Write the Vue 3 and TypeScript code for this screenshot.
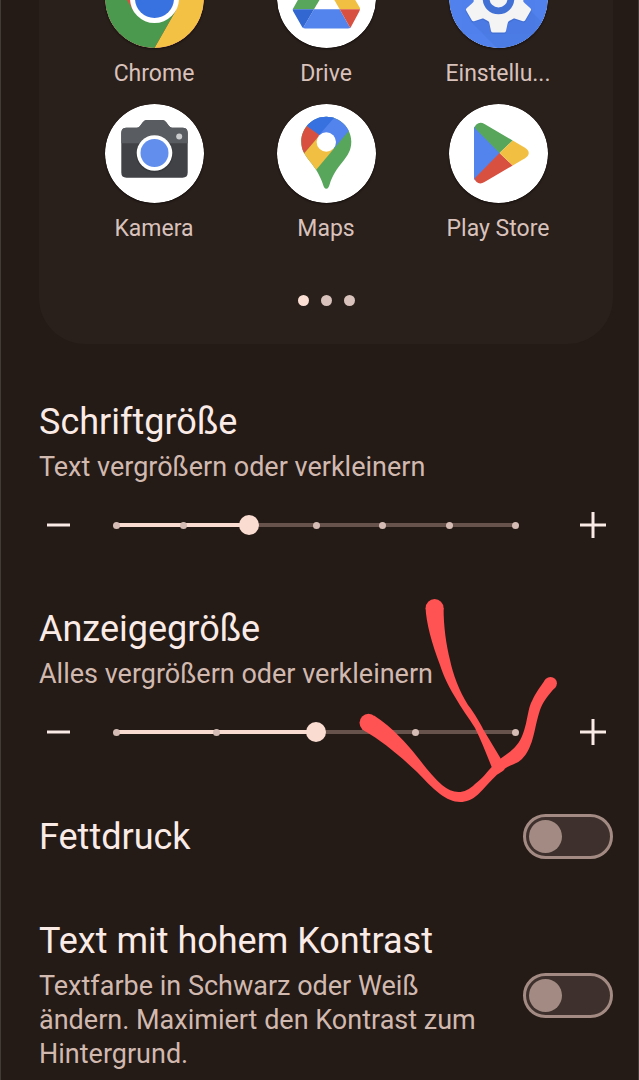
<script setup lang="ts">
import { reactive } from 'vue'

interface AppEntry {
  id: string
  label: string
}

interface SizeSetting {
  id: string
  title: string
  summary: string
  steps: number
  value: number
}

interface SwitchSetting {
  id: string
  title: string
  summary?: string
  on: boolean
}

const apps: AppEntry[] = [
  { id: 'chrome', label: 'Chrome' },
  { id: 'drive', label: 'Drive' },
  { id: 'settings', label: 'Einstellu...' },
  { id: 'camera', label: 'Kamera' },
  { id: 'maps', label: 'Maps' },
  { id: 'play', label: 'Play Store' },
]

const teeth = [0, 60, 120, 180, 240, 300]

const sizes = reactive<SizeSetting[]>([
  { id: 'font-size', title: 'Schriftgröße', summary: 'Text vergrößern oder verkleinern', steps: 7, value: 2 },
  { id: 'display-size', title: 'Anzeigegröße', summary: 'Alles vergrößern oder verkleinern', steps: 5, value: 2 },
])

const switches = reactive<SwitchSetting[]>([
  { id: 'bold', title: 'Fettdruck', on: false },
  {
    id: 'contrast',
    title: 'Text mit hohem Kontrast',
    summary: 'Textfarbe in Schwarz oder Weiß ändern. Maximiert den Kontrast zum Hintergrund.',
    on: false,
  },
])

function change(setting: SizeSetting, delta: number): void {
  setting.value = Math.min(setting.steps - 1, Math.max(0, setting.value + delta))
}
</script>

<template>
  <main class="page">
    <section class="preview">
      <ul class="apps">
        <li v-for="app in apps" :key="app.id" class="app">
          <svg class="app-icon" viewBox="0 0 99 99" aria-hidden="true">
            <circle cx="49.5" cy="49.5" r="49.5" fill="#fff" />
            <g v-if="app.id === 'chrome'">
              <circle cx="49.5" cy="49.5" r="49.5" fill="#d8513f" />
              <path d="M49.5 25H92.4A49.5 49.5 0 0 1 49.5 99L70.7 61.8Z" fill="#f3c244" />
              <path d="M70.7 61.8L49.5 99A49.5 49.5 0 0 1 6.6 24.8L28.3 61.8L49.5 74Z" fill="#4b994e" />
              <circle cx="49.5" cy="49.5" r="24.5" fill="#fff" />
              <circle cx="49.5" cy="49.5" r="19.5" fill="#3871e0" />
            </g>
            <g v-else-if="app.id === 'drive'">
              <path d="M15.7 60.3L37 22H38L50 38.4L37 60.3Z" fill="#58a55c" />
              <path d="M37 22Q49 19 61 22L50 38.4Z" fill="#3e8745" />
              <path d="M61 22L83 59V60.3H62.7L50 38.4Z" fill="#f1bf42" />
              <path d="M37 60.3H62.7L73.3 79L71 79.5H28L26 79Z" fill="#5383ec" />
              <path d="M15.7 60.3H37L26 79Q25 78 24 76L16 62Z" fill="#3266d0" />
              <path d="M62.7 60.3H83Q83 61 82 63L75 76Q74 78 73.3 79Z" fill="#d85140" />
            </g>
            <g v-else-if="app.id === 'settings'">
              <circle cx="49.5" cy="49.5" r="49.5" fill="#5081ec" />
              <path d="M22 73L43 94Q47 99 49.5 99A49.5 49.5 0 0 0 93 73L81 61Z" fill="#4878df" opacity=".6" />
              <g fill="#3d69ca" opacity=".6" transform="translate(0 1)">
                <circle cx="49.5" cy="49.5" r="25.5" />
                <path
                  v-for="angle in teeth"
                  :key="angle"
                  d="M37 71Q40 72 40.600 76L42 82.500Q42.500 84 44 84H55Q56.500 84 57 82.500L58.400 76Q59 72 62 71Z"
                  :transform="`rotate(${angle} 49.5 49.5)`"
                />
              </g>
              <g fill="#f4f4f5">
                <circle cx="49.5" cy="49.5" r="25" />
                <path
                  v-for="angle in teeth"
                  :key="angle"
                  d="M37 70Q40 71 40.500 75L42 82Q42.400 83.500 44 83.500H55Q56.600 83.500 57 82L58.500 75Q59 71 62 70Z"
                  :transform="`rotate(${angle} 49.5 49.5)`"
                />
              </g>
              <circle cx="49.5" cy="49.5" r="15.8" fill="#4271d6" />
              <circle cx="49.5" cy="49.5" r="9" fill="#f4f4f5" />
            </g>
            <g v-else-if="app.id === 'camera'">
              <path
                d="M21.500 23.700H32Q34 23.700 35 22L38 18Q39.500 16 42 16H57Q59.500 16 61 18L64 22Q65.500 23.700 67 23.700H77.500Q82.700 23.700 82.700 29V68.500Q82.700 73.700 77.500 73.700H21.500Q16.300 73.700 16.300 68.500V29Q16.300 23.700 21.500 23.700Z"
                fill="#404246"
              />
              <path
                d="M16.300 39.300V29Q16.300 23.700 21.500 23.700H32Q34 23.700 35 22L38 18Q39.500 16 42 16H57Q59.500 16 61 18L64 22Q65.500 23.700 67 23.700H77.500Q82.700 23.700 82.700 29V39.300Z"
                fill="#595c61"
              />
              <circle cx="49.5" cy="49.8" r="18.6" fill="#2d2f32" opacity=".5" />
              <circle cx="49.5" cy="49" r="17.8" fill="#fff" />
              <circle cx="49.5" cy="49" r="14" fill="#628fed" />
              <circle cx="74.2" cy="32.4" r="3" fill="#cbccce" />
            </g>
            <g v-else-if="app.id === 'maps'">
              <clipPath id="pin-shape">
                <path
                  d="M49.300 12.700C35.500 12.700 24.300 23.800 24.300 37.500C24.300 46 27.500 50.500 33 57.500C38.500 64.500 43 71 46 80.500C46.800 83.200 47.500 84.700 49.300 84.700C51.100 84.700 51.800 83.200 52.600 80.500C55.500 71 60 64.500 65.500 58C71 51 74.300 46 74.300 37.500C74.300 23.800 63 12.700 49.300 12.700Z"
                />
              </clipPath>
              <g clip-path="url(#pin-shape)">
                <path d="M20 10H80V90H20Z" fill="#58a65c" />
                <path d="M30.700 22.700L20 10H86L71.700 27L54 48L41.700 31.500Z" fill="#5383ec" />
                <path d="M30.700 22.700L22 12H60L56 15L41.700 31.500Z" fill="#3771e0" />
                <path d="M30.700 22.700L20 14V58L27.300 49.300L43 31.500Z" fill="#d85140" />
                <path d="M27.300 49.300L42 32L57 44.500L39 66L32 72Z" fill="#f1bf42" />
              </g>
              <circle cx="49.3" cy="38" r="9.7" fill="#fff" />
            </g>
            <g v-else>
              <path d="M25.500 22.500L51.500 49L25.500 76Q25 75.500 25 74V24.500Q25 23 25.500 22.500Z" fill="#5383ec" />
              <path d="M25.500 23.800C26.500 19.500 31 17 35.500 20L63.700 36.500L50.500 49Z" fill="#58a65c" />
              <path d="M25.500 74.500C26.500 78.800 31 81 35.500 78L63.700 61.500L50.500 49Z" fill="#d85140" />
              <path d="M63.700 36.500L76 43.700Q79.700 46 79.700 49Q79.700 52 76 54.300L63.700 61.500L50.500 49Z" fill="#f1bf42" />
            </g>
          </svg>
          <span class="app-label">{{ app.label }}</span>
        </li>
      </ul>
      <div class="dots">
        <span class="dot active"></span>
        <span class="dot"></span>
        <span class="dot"></span>
      </div>
    </section>

    <section v-for="item in sizes" :key="item.id" class="size">
      <label class="title" :for="item.id">{{ item.title }}</label>
      <p class="summary">{{ item.summary }}</p>
      <div class="slider-row">
        <button class="step" type="button" :aria-label="`${item.title} verkleinern`" @click="change(item, -1)">
          <svg viewBox="0 0 40 40" aria-hidden="true"><path d="M8 20H31" /></svg>
        </button>
        <div class="slider">
          <div class="track">
            <div class="fill" :style="{ width: `${(item.value / (item.steps - 1)) * 100}%` }"></div>
          </div>
          <div class="ticks">
            <span v-for="n in item.steps" :key="n" class="tick"></span>
          </div>
          <input :id="item.id" v-model.number="item.value" class="range" type="range" min="0" :max="item.steps - 1" step="1" />
        </div>
        <button class="step" type="button" :aria-label="`${item.title} vergrößern`" @click="change(item, 1)">
          <svg viewBox="0 0 40 40" aria-hidden="true"><path d="M7 20H33M20 7V33" /></svg>
        </button>
      </div>
    </section>

    <section class="switches">
      <label v-for="item in switches" :key="item.id" class="switch-row" :for="item.id">
        <span class="switch-text">
          <span class="title">{{ item.title }}</span>
          <span v-if="item.summary" class="summary">{{ item.summary }}</span>
        </span>
        <input :id="item.id" v-model="item.on" class="switch" type="checkbox" role="switch" />
      </label>
    </section>

    <svg class="scribble" viewBox="350 590 220 220" aria-hidden="true">
      <circle cx="434.6" cy="608" r="9" />
      <circle cx="368.5" cy="722.8" r="9" />
      <circle cx="550.5" cy="683.3" r="6.4" />
      <path
        d="M425.600 608H443.600C443.500 625 446 644 450 660C453 674 459 691 468 705C475 714 480 723 483 729L500.700 758.500L497 775L491.700 767C486 753 481 740 475 728C469 718 461 708 455 697C447 684 443 674 440 665C432 644 426 622 425.600 608Z"
      />
      <path
        d="M364 730.600L374 715.600C393 728 407 744 417 756.500C426 768 434 778 442 785C453 794 464 795 475 784C482 779 486 773 491.700 767L500.700 758.500C507 754 512 751 516.700 745C522 739 524 731 526 723.500C528 715 529 706 532 701C536 692 541 686 545.500 679.300L555.500 687.300C548 695 543 702 540 710C536 722 535 732 531.700 742C529 749 527 754 522 759C517 764 510 765 505 768.500C503 772 499 773 496.700 775C490 781 485 788 478 794.500C465 806 452 803 440 794C432 788 424 779 417 772C400 756 382 741 364 730.600Z"
      />
    </svg>
  </main>
</template>

<style>
body {
  margin: 0;
  background: #241a16;
}
</style>

<style scoped>
.page {
  position: relative;
  box-sizing: border-box;
  min-height: 100vh;
  overflow: hidden;
  padding: 0 25px 0 38px;
  border: solid #413a37;
  border-width: 0 1px;
  background: #241a16;
  color: #fbebe6;
  font-family: Roboto, "Noto Sans", sans-serif;
}

/* The upper app row is scrolled halfway past the top edge. */
.preview {
  margin-top: -51px;
  margin-bottom: 56px;
  padding: 0 29px 38px;
  border-radius: 0 0 46px 46px;
  background: #291f1b;
}

.apps {
  display: grid;
  grid-template-columns: repeat(3, 1fr);
  row-gap: 16px;
  margin: 0;
  padding: 0;
  list-style: none;
}

.app {
  display: flex;
  flex-direction: column;
  align-items: center;
  gap: 12px;
}

.app-icon {
  width: 99px;
  height: 99px;
  border-radius: 50%;
  box-shadow: 0 1px 2px rgba(0, 0, 0, 0.5);
}

.app-label {
  color: #d8c2bb;
  font-size: 23px;
  line-height: 28px;
}

.dots {
  display: flex;
  justify-content: center;
  gap: 12px;
  margin-top: 52px;
}

.dot {
  width: 11px;
  height: 11px;
  border-radius: 50%;
  background: #d8c2bb;
}

.dot.active {
  background: #fbdfd5;
}

.size {
  margin-bottom: 58px;
}

.title {
  display: block;
  font-size: 36px;
  line-height: 44px;
}

.summary {
  display: block;
  margin: 6px 0 0;
  color: #d1b9b0;
  font-size: 27px;
  line-height: 34px;
}

.slider-row {
  display: flex;
  align-items: center;
  height: 48px;
  margin-top: 17px;
}

.step {
  flex: none;
  width: 40px;
  height: 40px;
  padding: 0;
  border: 0;
  background: none;
  cursor: pointer;
}

.step svg {
  display: block;
  width: 40px;
  height: 40px;
  fill: none;
  stroke: #fbebe6;
  stroke-width: 3;
}

.slider {
  display: grid;
  flex: 1;
  align-items: center;
  margin: 0 47px 0 27px;
}

.track,
.ticks,
.range {
  grid-area: 1 / 1;
}

.track {
  height: 4px;
  margin: 0 10px;
  background: #67534c;
}

.fill {
  height: 4px;
  background: #fadcd1;
}

.ticks {
  display: flex;
  justify-content: space-between;
  margin: 0 7px;
}

.tick {
  width: 7px;
  height: 7px;
  border-radius: 50%;
  background: #d5bdb5;
}

.range {
  width: 100%;
  height: 20px;
  margin: 0;
  appearance: none;
  background: none;
  cursor: pointer;
}

.range::-webkit-slider-thumb {
  width: 20px;
  height: 20px;
  border: 0;
  border-radius: 50%;
  appearance: none;
  background: #fadcd1;
}

.range::-moz-range-thumb {
  width: 20px;
  height: 20px;
  border: 0;
  border-radius: 50%;
  background: #fadcd1;
}

.switches {
  display: flex;
  flex-direction: column;
  gap: 60px;
}

.switch-row {
  display: flex;
  align-items: center;
  justify-content: space-between;
  gap: 36px;
  cursor: pointer;
}

.switch {
  display: flex;
  flex: none;
  align-items: center;
  box-sizing: border-box;
  width: 90px;
  height: 45px;
  margin: 0;
  padding: 0 3px;
  border: 3px solid #a38b83;
  border-radius: 23px;
  appearance: none;
  background: #3e312d;
  cursor: pointer;
}

.switch::before {
  width: 33px;
  height: 33px;
  border-radius: 50%;
  background: #a38b83;
  content: "";
}

.switch:checked {
  justify-content: flex-end;
}

.scribble {
  position: absolute;
  top: 590px;
  left: 349px;
  width: 220px;
  height: 220px;
  fill: #ff5252;
  pointer-events: none;
}
</style>
